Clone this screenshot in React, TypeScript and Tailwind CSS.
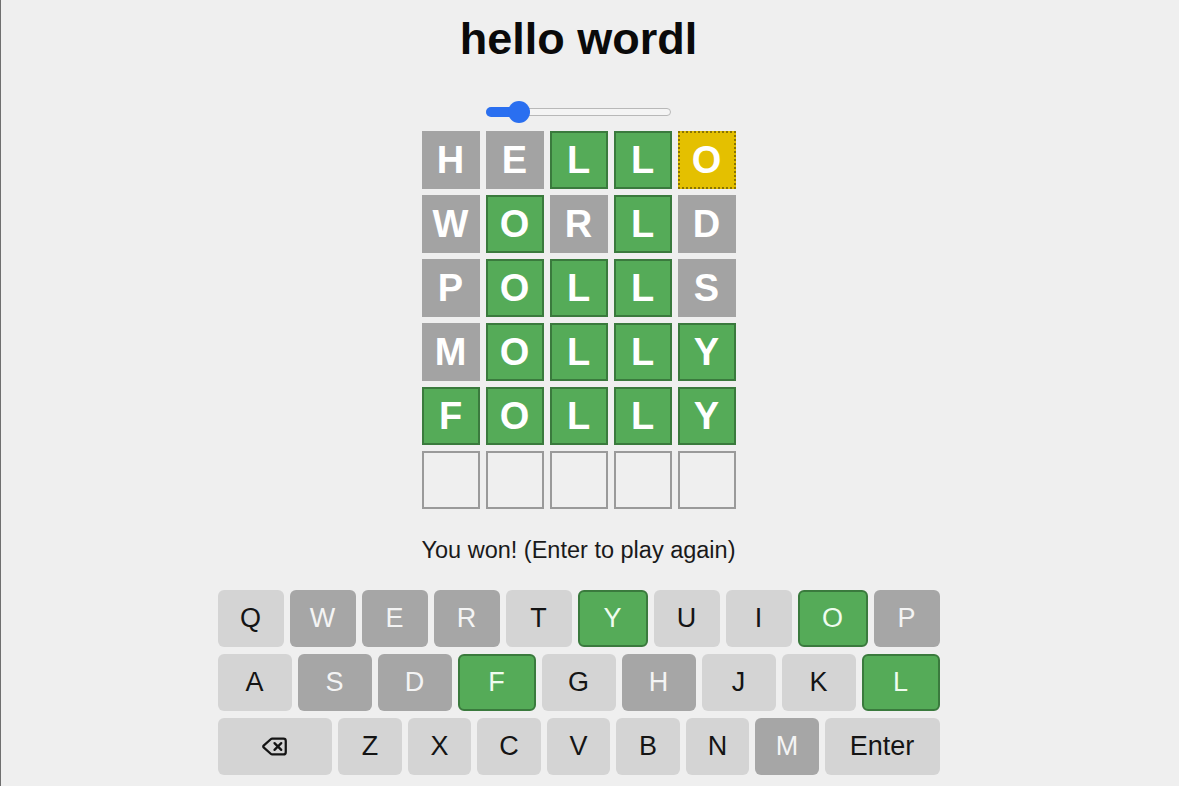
import React from "react";
import { Delete } from "lucide-react";

type S = "g" | "y" | "x" | "e";

const rows: { l: string; s: S }[][] = [
  [
    { l: "H", s: "x" },
    { l: "E", s: "x" },
    { l: "L", s: "g" },
    { l: "L", s: "g" },
    { l: "O", s: "y" },
  ],
  [
    { l: "W", s: "x" },
    { l: "O", s: "g" },
    { l: "R", s: "x" },
    { l: "L", s: "g" },
    { l: "D", s: "x" },
  ],
  [
    { l: "P", s: "x" },
    { l: "O", s: "g" },
    { l: "L", s: "g" },
    { l: "L", s: "g" },
    { l: "S", s: "x" },
  ],
  [
    { l: "M", s: "x" },
    { l: "O", s: "g" },
    { l: "L", s: "g" },
    { l: "L", s: "g" },
    { l: "Y", s: "g" },
  ],
  [
    { l: "F", s: "g" },
    { l: "O", s: "g" },
    { l: "L", s: "g" },
    { l: "L", s: "g" },
    { l: "Y", s: "g" },
  ],
  [
    { l: "", s: "e" },
    { l: "", s: "e" },
    { l: "", s: "e" },
    { l: "", s: "e" },
    { l: "", s: "e" },
  ],
];

function Tile({ l, s }: { l: string; s: S }) {
  const cls =
    s === "g"
      ? "bg-[#55ab58] border-2 border-[#3a7a3d]"
      : s === "y"
      ? "bg-[#e4c000] border-2 border-dotted border-[#8a7400]"
      : s === "x"
      ? "bg-[#a3a3a3] border-2 border-[#a3a3a3]"
      : "bg-transparent border-2 border-[#9a9a9a]";
  return (
    <div
      className={`w-[58px] h-[58px] flex items-center justify-center text-white font-bold text-[38px] leading-none ${cls}`}
    >
      {l}
    </div>
  );
}

type K = "l" | "d" | "g";
const kb: { k: string; s: K; wide?: boolean }[][] = [
  [
    { k: "Q", s: "l" },
    { k: "W", s: "d" },
    { k: "E", s: "d" },
    { k: "R", s: "d" },
    { k: "T", s: "l" },
    { k: "Y", s: "g" },
    { k: "U", s: "l" },
    { k: "I", s: "l" },
    { k: "O", s: "g" },
    { k: "P", s: "d" },
  ],
  [
    { k: "A", s: "l" },
    { k: "S", s: "d" },
    { k: "D", s: "d" },
    { k: "F", s: "g" },
    { k: "G", s: "l" },
    { k: "H", s: "d" },
    { k: "J", s: "l" },
    { k: "K", s: "l" },
    { k: "L", s: "g" },
  ],
  [
    { k: "⌫", s: "l", wide: true },
    { k: "Z", s: "l" },
    { k: "X", s: "l" },
    { k: "C", s: "l" },
    { k: "V", s: "l" },
    { k: "B", s: "l" },
    { k: "N", s: "l" },
    { k: "M", s: "d" },
    { k: "Enter", s: "l", wide: true },
  ],
];

function Key({ k, s, wide }: { k: string; s: K; wide?: boolean }) {
  const cls =
    s === "g"
      ? "bg-[#55ab58] border-2 border-[#3a7a3d] text-[#effcef]"
      : s === "d"
      ? "bg-[#a6a6a6] text-[#f4f4f4]"
      : "bg-[#d4d4d4] text-[#141414]";
  return (
    <div
      className={`${wide ? "flex-[1.81]" : "flex-1"} basis-0 min-w-0 h-[57px] rounded-[6px] flex items-center justify-center text-[27px] leading-none ${cls}`}
    >
      {k === "⌫" ? <Delete size={27} strokeWidth={2} /> : k}
    </div>
  );
}

export default function App() {
  return (
    <div
      className="min-h-[786px] w-full bg-[#efefef] border-l border-[#6f6f6f] flex justify-center pr-[23px]"
      style={{ fontFamily: '"Liberation Sans", Arial, Helvetica, sans-serif' }}
    >
      <div className="flex flex-col items-center w-[722px]">
        <h1 className="pt-[17px] h-[61px] text-[45px] leading-[44px] font-bold text-[#0a0a0a]">
          hello wordl
        </h1>
        <div className="mt-[40px] h-[22px] w-[185px] relative flex items-center">
          <div className="w-full h-[8px] rounded-full border border-[#b8b8b8] bg-[#f4f4f4]" />
          <div className="absolute left-0 top-[6px] h-[10px] w-[36px] rounded-full bg-[#2a6ff0]" />
          <div className="absolute left-[22px] top-0 h-[22px] w-[22px] rounded-full bg-[#2a6ff0]" />
        </div>
        <div className="mt-[8px] flex flex-col gap-[6px]">
          {rows.map((r, i) => (
            <div key={i} className="flex gap-[6px]">
              {r.map((t, j) => (
                <Tile key={j} l={t.l} s={t.s} />
              ))}
            </div>
          ))}
        </div>
        <div className="mt-[27px] text-[23.5px] leading-[28px] text-[#1a1a1a]">
          You won! (Enter to play again)
        </div>
        <div className="mt-[26px] w-full flex flex-col gap-[7px]">
          {kb.map((r, i) => (
            <div key={i} className="flex gap-[6px] w-full">
              {r.map((k, j) => (
                <Key key={j} k={k.k} s={k.s} wide={k.wide} />
              ))}
            </div>
          ))}
        </div>
      </div>
    </div>
  );
}
